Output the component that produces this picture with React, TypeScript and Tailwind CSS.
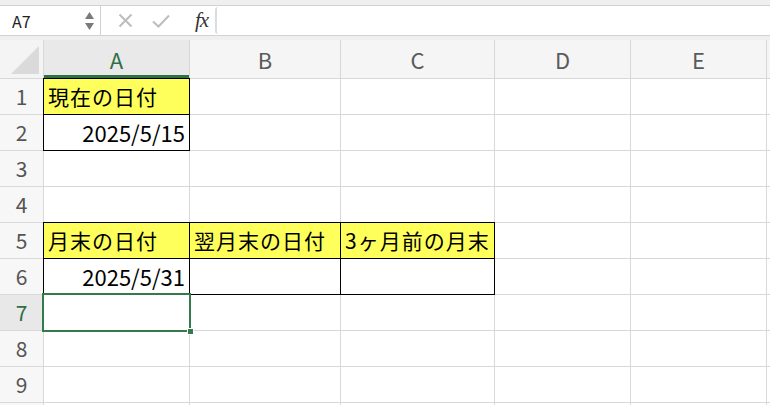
import React from 'react'

const COLS = ['A', 'B', 'C', 'D', 'E', '']
const ROWS = [1, 2, 3, 4, 5, 6, 7, 8, 9, 10]

type CellSpec = { text?: string; align?: 'left' | 'right'; fill?: boolean; box?: boolean }

const CELLS: Record<string, CellSpec> = {
  A1: { text: '現在の日付', fill: true, box: true },
  A2: { text: '2025/5/15', align: 'right', box: true },
  A5: { text: '月末の日付', fill: true, box: true },
  B5: { text: '翌月末の日付', fill: true, box: true },
  C5: { text: '3ヶ月前の月末', fill: true, box: true },
  A6: { text: '2025/5/31', align: 'right', box: true },
  B6: { box: true },
  C6: { box: true },
}

const font = { fontFamily: '"Noto Sans CJK JP", "Noto Sans", sans-serif' }

function FormulaBar() {
  return (
    <div className="h-[40px] bg-[#efefef] pt-[5px]">
      <div className="flex h-[31px] border-y border-[#d2d2d2] bg-white">
        <div className="flex w-[101px] items-center justify-between border-r border-[#d2d2d2] pl-[12px] pr-[6px]">
          <span className="text-[16px] text-[#222]">A7</span>
          <div className="flex flex-col gap-[4px]">
            <svg width="9" height="7" viewBox="0 0 9 7">
              <path d="M4.5 0 L9 7 L0 7 Z" fill="#7a7a7a" />
            </svg>
            <svg width="9" height="7" viewBox="0 0 9 7">
              <path d="M0 0 L9 0 L4.5 7 Z" fill="#7a7a7a" />
            </svg>
          </div>
        </div>
        <div className="flex w-[114px] items-center pl-[17px]">
          <svg width="15" height="15" viewBox="0 0 15 15" className="mr-[19px]">
            <path d="M1.5 1.5 L13.5 13.5 M13.5 1.5 L1.5 13.5" stroke="#bdbdbd" strokeWidth="2" />
          </svg>
          <svg width="18" height="14" viewBox="0 0 18 14" className="mr-[25px]">
            <path d="M1 7.5 L6.5 12.5 L17 1.5" stroke="#bdbdbd" strokeWidth="2" fill="none" />
          </svg>
          <span
            className="text-[21px] italic leading-none tracking-[-1px] text-[#333]"
            style={{ fontFamily: '"Liberation Serif", serif' }}
          >
            fx
          </span>
        </div>
        <div className="my-[1px] flex-1 rounded-l-[3px] border-l-2 border-[#dcdcdc] bg-white" />
      </div>
    </div>
  )
}

export default function App() {
  return (
    <div className="h-[405px] w-[770px] overflow-hidden bg-white" style={font}>
      <FormulaBar />
      <div className="grid grid-cols-[43px_145px_150px_153px_135px_135px_1fr] grid-rows-[38px_repeat(10,35px)] gap-px bg-[#d8d8d8]">
        <div className="relative bg-[#f4f4f4]">
          <svg width="43" height="38" viewBox="0 0 43 38" className="block">
            <path d="M11 34 L39 6 L39 34 Z" fill="#dadada" />
          </svg>
        </div>
        {COLS.map((c) => (
          <div
            key={c || 'F'}
            className={
              c === 'A'
                ? 'flex items-center justify-center border-b-[3px] border-[#2f6f45] bg-[#e9e9e9] pt-[3px] text-[22px] text-[#2f6f45]'
                : 'flex items-center justify-center bg-[#f5f5f5] text-[22px] text-[#5a5a5a]'
            }
          >
            {c}
          </div>
        ))}
        {ROWS.map((r) => (
          <React.Fragment key={r}>
            <div
              className={
                r === 7
                  ? 'flex items-center justify-center bg-[#e8e8e8] text-[21px] text-[#2f6f45]'
                  : 'flex items-center justify-center bg-[#f7f7f7] text-[21px] text-[#555]'
              }
            >
              {r < 10 ? r : ''}
            </div>
            {COLS.map((c) => {
              const id = `${c}${r}`
              const spec = CELLS[id]
              const selected = id === 'A7'
              const numeric = spec?.align === 'right'
              return (
                <div
                  key={id || `F${r}`}
                  className={[
                    'relative flex items-center overflow-hidden whitespace-nowrap px-[4px] text-black',
                    numeric ? 'text-[22px]' : 'text-[21px] tracking-[1px]',
                    spec?.fill ? 'bg-[#ffff5c]' : 'bg-white',
                    spec?.box ? 'z-10 outline outline-1 outline-black' : '',
                    numeric ? 'justify-end' : 'justify-start',
                    selected ? 'z-20 overflow-visible outline-2 outline-[#357a4c]' : '',
                  ].join(' ')}
                >
                  {spec?.text}
                  {selected && (
                    <span className="absolute bottom-[-5px] right-[-5px] h-[7px] w-[7px] border border-white bg-[#357a4c]" />
                  )}
                </div>
              )
            })}
          </React.Fragment>
        ))}
      </div>
    </div>
  )
}
